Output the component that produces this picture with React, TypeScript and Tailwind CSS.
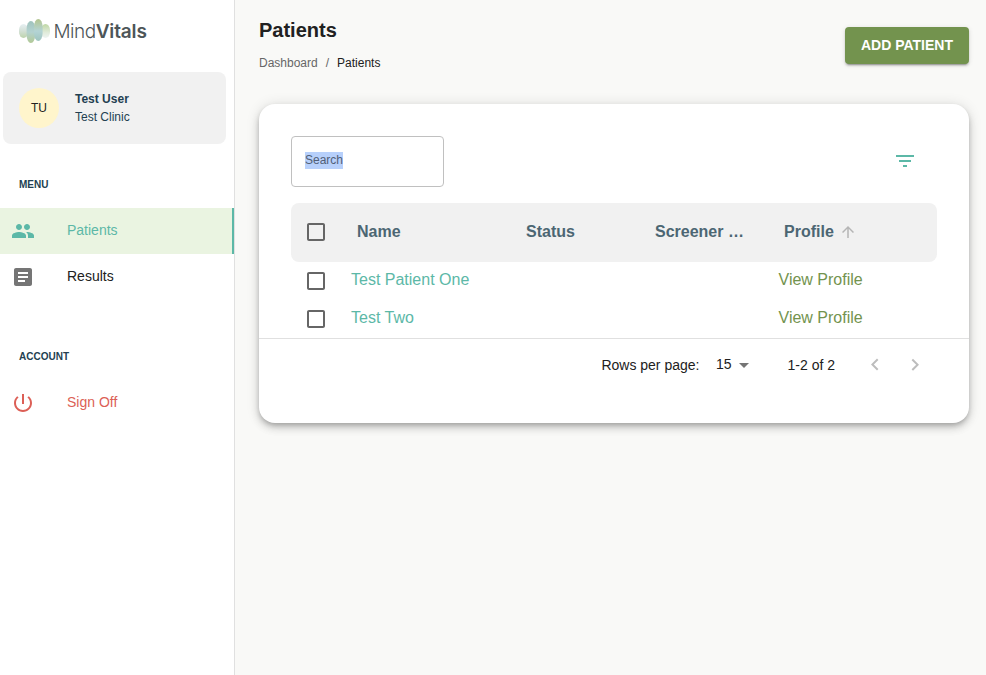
import React from "react";

type IconProps = { d: string; size?: number; className?: string };

const Icon = ({ d, size = 24, className = "" }: IconProps) => (
  <svg width={size} height={size} viewBox="0 0 24 24" fill="currentColor" className={`shrink-0 ${className}`}>
    <path d={d} />
  </svg>
);

const paths = {
  people:
    "M16 11c1.66 0 2.99-1.34 2.99-3S17.66 5 16 5c-1.66 0-3 1.34-3 3s1.34 3 3 3zm-8 0c1.66 0 2.99-1.34 2.99-3S9.66 5 8 5C6.34 5 5 6.34 5 8s1.34 3 3 3zm0 2c-2.33 0-7 1.17-7 3.5V19h14v-2.5c0-2.33-4.67-3.5-7-3.5zm8 0c-.29 0-.62.02-.97.05 1.16.84 1.97 1.97 1.97 3.45V19h6v-2.5c0-2.33-4.67-3.5-7-3.5z",
  article:
    "M19 3H5c-1.1 0-2 .9-2 2v14c0 1.1.9 2 2 2h14c1.1 0 2-.9 2-2V5c0-1.1-.9-2-2-2zm-5 14H7v-2h7v2zm3-4H7v-2h10v2zm0-4H7V7h10v2z",
  power:
    "M13 3h-2v10h2V3zm4.83 2.17-1.42 1.42C17.99 7.86 19 9.81 19 12c0 3.87-3.13 7-7 7s-7-3.13-7-7c0-2.19 1.01-4.14 2.58-5.42L6.17 5.17C4.23 6.82 3 9.26 3 12c0 4.97 4.03 9 9 9s9-4.03 9-9c0-2.74-1.23-5.18-3.17-6.83z",
  filter: "M10 18h4v-2h-4v2zM3 6v2h18V6H3zm3 7h12v-2H6v2z",
  box: "M19 5v14H5V5h14m0-2H5c-1.1 0-2 .9-2 2v14c0 1.1.9 2 2 2h14c1.1 0 2-.9 2-2V5c0-1.1-.9-2-2-2z",
  arrowUp: "M4 12l1.41 1.41L11 7.83V20h2V7.83l5.58 5.59L20 12l-8-8-8 8z",
  dropDown: "M7 10l5 5 5-5z",
  left: "M15.41 16.09l-4.58-4.59 4.58-4.59L14 5.5l-6 6 6 6z",
  right: "M8.59 16.34l4.58-4.59-4.58-4.59L10 5.75l6 6-6 6z",
};

const Logo = () => (
  <div className="flex h-6 items-center pl-[19px]">
    <svg width="31" height="24" viewBox="0 0 31 24" className="shrink-0">
      <defs>
        <linearGradient id="petalA" x1="0" y1="0" x2="0" y2="1">
          <stop offset="0" stopColor="#e6eff2" />
          <stop offset="0.5" stopColor="#d3e0d6" />
          <stop offset="1" stopColor="#bdd3ac" />
        </linearGradient>
        <linearGradient id="petalB" x1="0" y1="0" x2="0" y2="1">
          <stop offset="0" stopColor="#9fc3bd" />
          <stop offset="0.5" stopColor="#b4d2d0" />
          <stop offset="1" stopColor="#b2c996" />
        </linearGradient>
        <linearGradient id="petalC" x1="0" y1="0" x2="0" y2="1">
          <stop offset="0" stopColor="#b3c58f" />
          <stop offset="0.55" stopColor="#b4d4d5" />
          <stop offset="1" stopColor="#9fc5bf" />
        </linearGradient>
        <linearGradient id="petalD" x1="0" y1="0" x2="0" y2="1">
          <stop offset="0" stopColor="#bfd7a5" />
          <stop offset="0.6" stopColor="#e0ebda" />
          <stop offset="1" stopColor="#eef4f2" />
        </linearGradient>
      </defs>
      <rect x="0" y="5" width="9" height="14" rx="4.5" ry="6" fill="url(#petalA)" />
      <rect x="22" y="5" width="9" height="14" rx="4.5" ry="6" fill="url(#petalD)" />
      <rect x="7.6" y="2" width="8.6" height="22" rx="4.3" ry="8" fill="url(#petalB)" />
      <rect x="15" y="0" width="8.6" height="22" rx="4.3" ry="8" fill="url(#petalC)" />
    </svg>
    <span className="ml-[3.5px] whitespace-nowrap pt-[2px] font-['Inter',sans-serif] text-[19px] leading-6 tracking-[-0.5px] text-[#4d5558]">
      <span className="font-light">Mind</span>
      <span className="font-semibold tracking-[-0.15px]">Vitals</span>
    </span>
  </div>
);

const Row = ({ name }: { name: string }) => (
  <div className="flex h-[38px] pl-[45px]">
    <Icon d={paths.box} className="mt-[7px] text-[#666]" />
    <span className="ml-[23px] w-[427.5px] text-base leading-[35px] text-[#5cb8a7]">{name}</span>
    <span className="text-base leading-[35px] text-[#73934e]">View Profile</span>
  </div>
);

export default function App() {
  return (
    <div className="flex h-[675px] w-[986px] overflow-hidden bg-[#f9f9f7] font-['Liberation_Sans',Arial,sans-serif] text-[#212121]">
      <aside className="flex w-[235px] shrink-0 flex-col border-r border-[#e0e0e0] bg-white pt-[19px]">
        <Logo />
        <div className="ml-[3px] mt-[29px] flex h-[72px] w-[223px] items-center rounded-lg bg-[#f1f1f1] pl-4">
          <div className="flex size-10 items-center justify-center rounded-full bg-[#fff5cc] text-xs">TU</div>
          <div className="ml-4 text-xs leading-[18px] text-[#233f51]">
            <div className="font-bold">Test User</div>
            <div>Test Clinic</div>
          </div>
        </div>
        <div className="mt-[33px] pl-[19px] text-[10px] font-bold leading-4 text-[#233f51]">MENU</div>
        <nav className="mt-[15px]">
          <div className="flex h-[46px] items-center border-r-2 border-[#5cb8a7] bg-[#eaf4e1] pl-[11px] text-[#5cb8a7]">
            <Icon d={paths.people} />
            <span className="ml-8 pb-[2px] text-sm">Patients</span>
          </div>
          <div className="flex h-[46px] items-center pl-[11px]">
            <Icon d={paths.article} className="text-[#757575]" />
            <span className="ml-8 pb-[2px] text-sm">Results</span>
          </div>
        </nav>
        <div className="mt-[49px] pl-[19px] text-[10px] font-bold leading-4 text-[#233f51]">ACCOUNT</div>
        <div className="mt-[15px] flex h-[46px] items-center pl-[11px] text-[#dc5f56]">
          <Icon d={paths.power} />
          <span className="ml-8 pb-[2px] text-sm">Sign Off</span>
        </div>
      </aside>

      <main className="flex flex-1 flex-col pl-6 pr-[17px]">
        <header className="flex h-[104px] justify-between">
          <div className="pt-[15px]">
            <h1 className="text-xl font-bold leading-[30px]">Patients</h1>
            <div className="mt-[9px] flex text-xs leading-[18px]">
              <span className="text-[#666]">Dashboard</span>
              <span className="mx-2 text-[#666]">/</span>
              <span>Patients</span>
            </div>
          </div>
          <button className="mt-[27px] h-[37px] w-[124px] rounded bg-[#73934e] text-sm font-bold leading-[37px] text-white shadow-[0_3px_1px_-2px_rgba(0,0,0,0.2),0_2px_2px_0_rgba(0,0,0,0.14),0_1px_5px_0_rgba(0,0,0,0.12)]">
            ADD PATIENT
          </button>
        </header>

        <section className="h-[319px] rounded-2xl bg-white pt-8 shadow-[0_3px_5px_-1px_rgba(0,0,0,0.2),0_5px_8px_0_rgba(0,0,0,0.14),0_1px_14px_0_rgba(0,0,0,0.12)]">
          <div className="flex items-center justify-between pl-8 pr-[52px]">
            <div className="flex h-[51px] w-[153px] items-center rounded border border-[#c0c0c0] pb-[2px] pl-[13px]">
              <span className="bg-[#b7d0fb] text-xs leading-[17px] text-[#525f77]">Search</span>
            </div>
            <Icon d={paths.filter} className="mb-[2px] text-[#5cb8a7]" />
          </div>

          <div className="mx-8 mt-4 flex h-[59px] items-center rounded-lg bg-[#f1f1f1] pl-[13px] text-base font-bold text-[#4c6673]">
            <Icon d={paths.box} className="mb-[2px] text-[#666]" />
            <span className="ml-[29px] w-[169px] pb-[2px]">Name</span>
            <span className="w-[129px] pb-[2px]">Status</span>
            <span className="w-[129px] pb-[2px]">Screener …</span>
            <span className="pb-[2px]">Profile</span>
            <Icon d={paths.arrowUp} size={18} className="mb-px ml-[5px] text-[#b5b5b5]" />
          </div>

          <div className="border-b border-[#e0e0e0]">
            <Row name="Test Patient One" />
            <Row name="Test Two" />
          </div>

          <div className="flex h-[52px] items-center justify-end pr-[42px] text-sm">
            <span>Rows per page:</span>
            <span className="ml-[16.5px] pb-[2px]">15</span>
            <Icon d={paths.dropDown} className="text-[#757575]" />
            <span className="ml-8">1-2 of 2</span>
            <Icon d={paths.left} className="ml-7 text-[#bdbdbd]" />
            <Icon d={paths.right} className="ml-4 text-[#bdbdbd]" />
          </div>
        </section>
      </main>
    </div>
  );
}
